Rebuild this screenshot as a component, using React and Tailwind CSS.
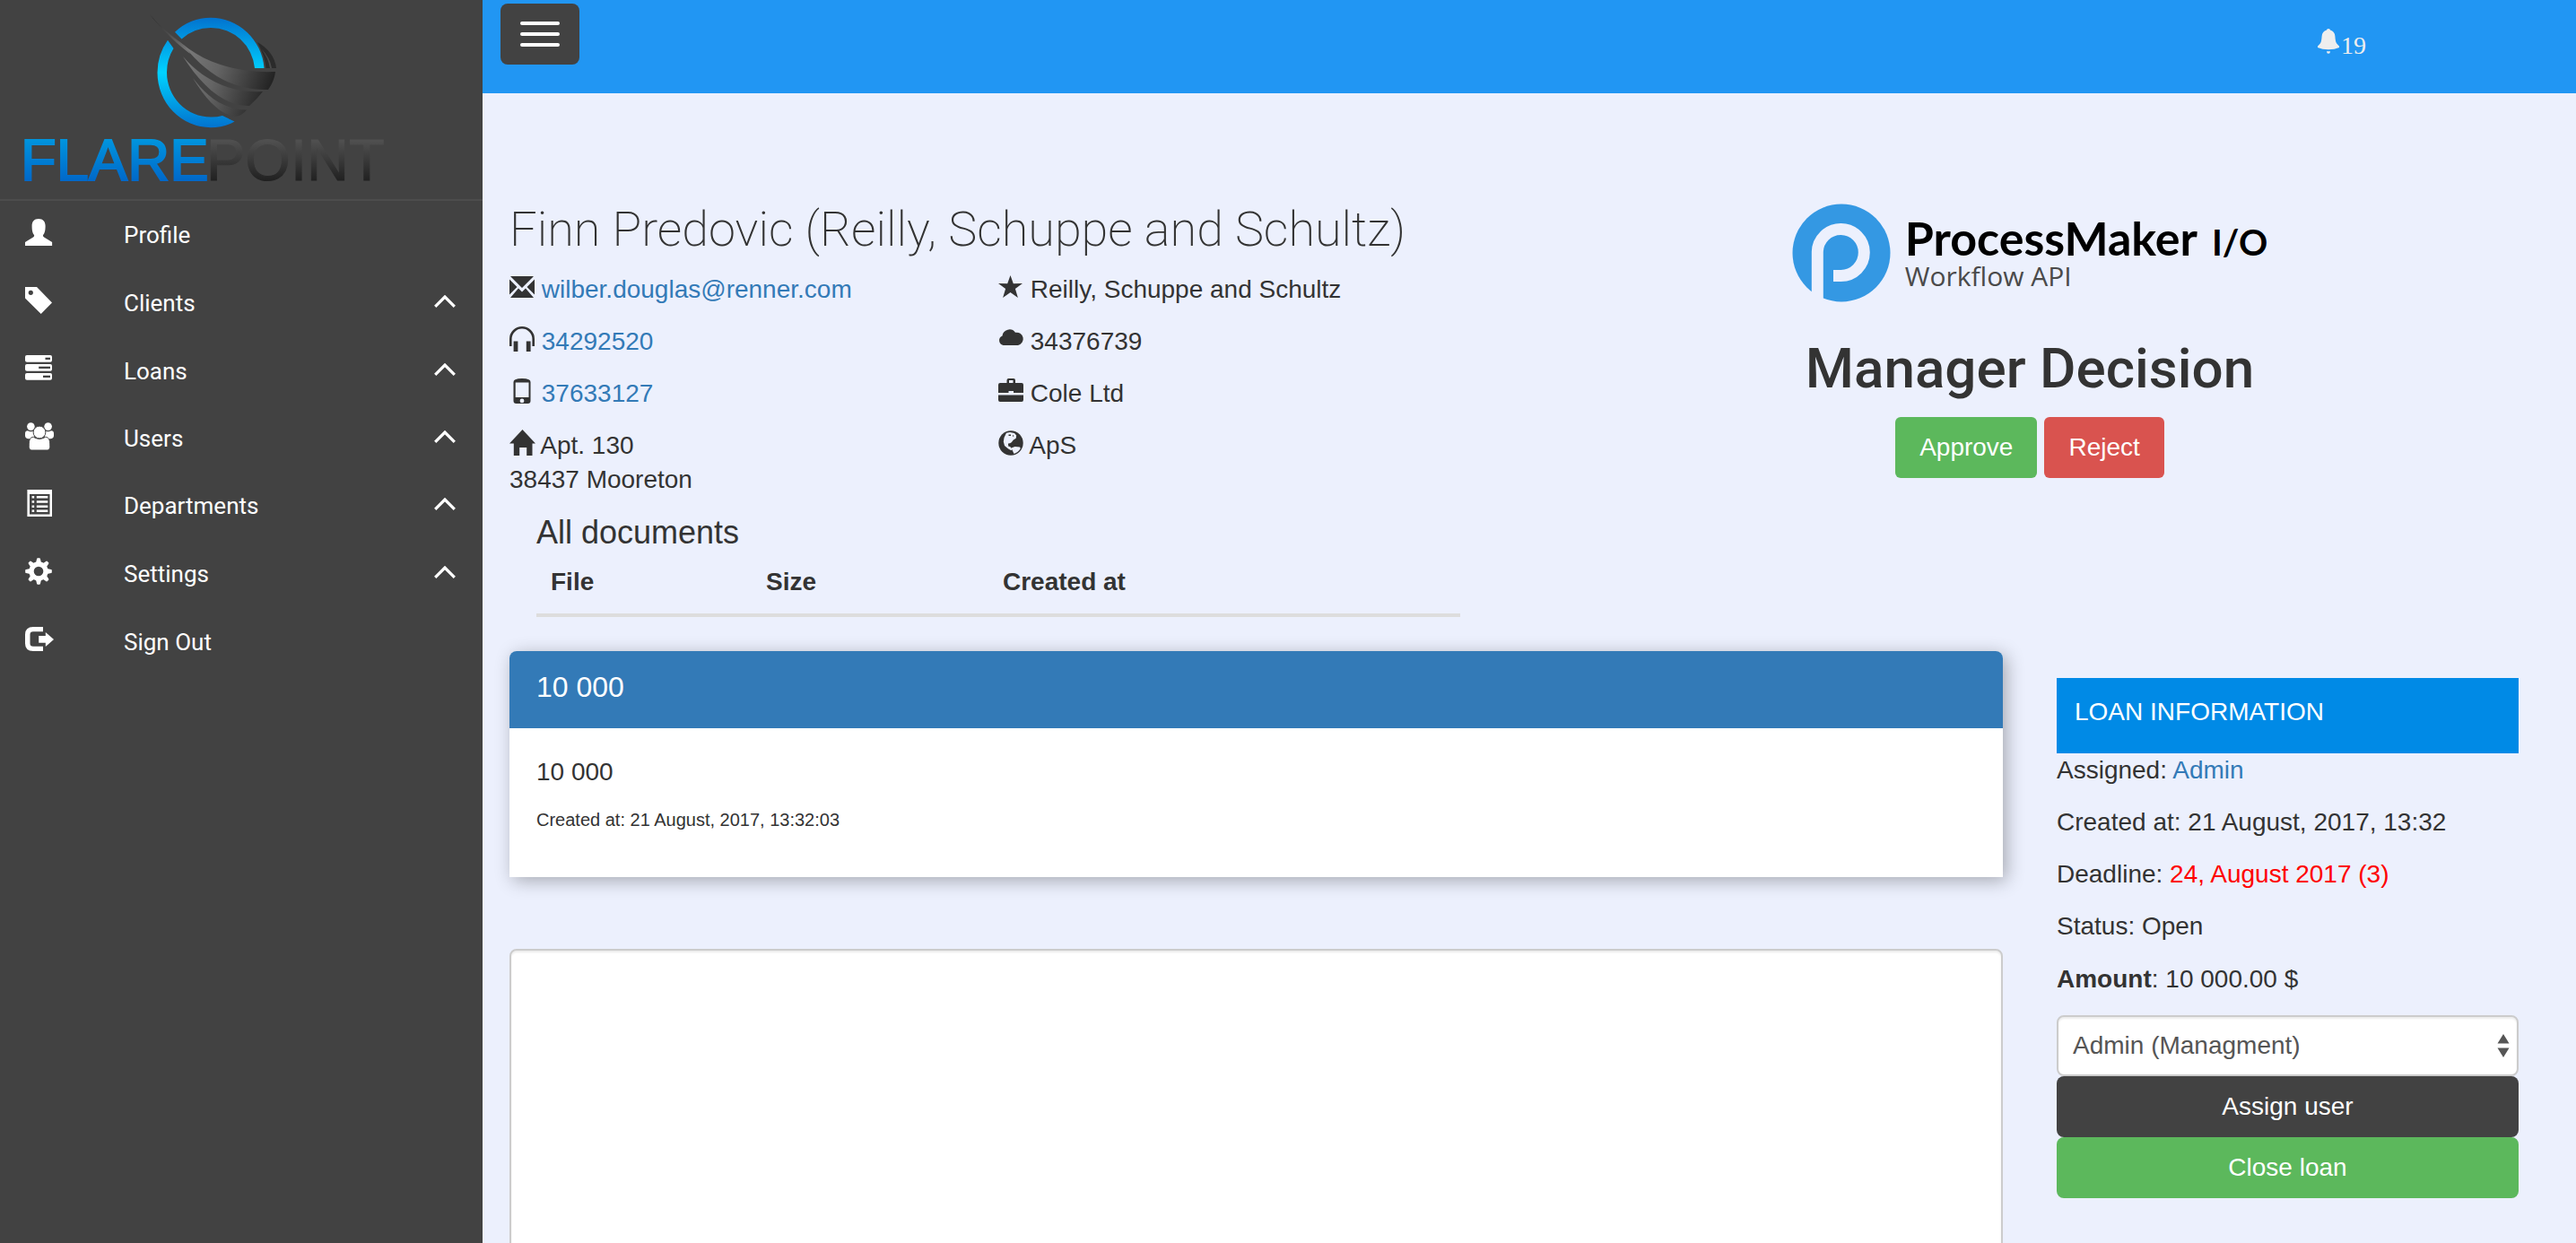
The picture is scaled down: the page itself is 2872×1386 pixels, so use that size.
import React, { useState } from "react";
import clsx from "clsx";

const navIcons = {
  profile: (
    <path d="M0 30v-4l9-5.500q1.500-1 1-2.500C8 16 7.600 12 7.600 8 7.600 3 10 0 15 0s7.600 3 7.600 8c0 4-.500 8-2.500 10q-.500 1.500 1 2.500l9 5.500v4z" />
  ),
  clients: (
    <path
      fillRule="evenodd"
      d="M0 0h13l17 17.500L17.700 30 0 12.400zM6.300 3.700a2.600 2.600 0 1 0 0 5.200 2.600 2.600 0 0 0 0-5.200z"
    />
  ),
  loans: (
    <>
      <rect width="30" height="7.700" rx="2" />
      <rect y="10" width="30" height="7.700" rx="2" />
      <rect y="20" width="30" height="7.700" rx="2" />
      <g fill="#424242">
        <rect x="22.500" y="2.700" width="5.500" height="2.300" />
        <rect x="15.200" y="12.700" width="12.800" height="2.300" />
        <rect x="20" y="22.700" width="8" height="2.300" />
      </g>
    </>
  ),
  users: (
    <>
      <circle cx="6.400" cy="4.600" r="4.300" />
      <circle cx="25.600" cy="4.600" r="4.300" />
      <path d="M0 12.500C0 10 1 9.300 3 9.300c2 1.200 5 1.200 7 0v9H4c-2.500 0-4-1.500-4-3.500zM32 12.500c0-2.500-1-3.200-3-3.200-2 1.200-5 1.200-7 0v9h6c2.500 0 4-1.500 4-3.500z" />
      <g stroke="#424242" strokeWidth="1">
        <path d="M4.200 25c0-5.500 1.500-8.700 5.300-8.700 4 2.700 9 2.700 13 0 3.800 0 5.300 3.200 5.300 8.700v2.500c0 2.200-1.500 3.500-3.500 3.500H7.700c-2 0-3.500-1.300-3.500-3.500z" />
        <circle cx="16" cy="11" r="6.900" />
      </g>
    </>
  ),
  departments: (
    <>
      <path fillRule="evenodd" d="M2.400 0H30v30H2.400zM5 5v22.600h22.500V5z" />
      <path d="M7.600 7h2.600v2.500H7.600zM12.800 7h12.500v2.500H12.800zM7.600 12.300h2.600v2.500H7.600zM12.800 12.300h12.500v2.500H12.800zM7.600 17.400h2.600v2.500H7.600zM12.800 17.400h12.500v2.500H12.800zM7.600 22.500h2.600V25H7.600zM12.800 22.500h12.500V25H12.800z" />
    </>
  ),
  settings: (
    <>
      {[0, 45, 90, 135].map((deg) => (
        <path
          key={deg}
          d="M12.300 4.500l.800-3.500q.200-.800 1-.800h1.800q.800 0 1 .8l.800 3.500v21l-.800 3.500q-.200.800-1 .8h-1.800q-.800 0-1-.8l-.800-3.500z"
          transform={`rotate(${deg} 15 15)`}
        />
      ))}
      <circle cx="15" cy="15" r="10.700" />
      <circle cx="15" cy="15" r="5.300" fill="#424242" />
    </>
  ),
  signout: (
    <>
      <path d="M20 1v5.200H9q-3.500 0-3.500 3.300v10q0 3.300 3.500 3.300h11V28H9q-9 0-9-8.500v-10Q0 1 9 1z" />
      <path d="M15.200 11h7.600V7L32 15l-9.200 8v-4.200h-7.600z" />
    </>
  ),
};

const navItems = [
  { icon: "profile", label: "Profile" },
  { icon: "clients", label: "Clients", sub: true },
  { icon: "loans", label: "Loans", sub: true },
  { icon: "users", label: "Users", sub: true, compact: true },
  { icon: "departments", label: "Departments", sub: true },
  { icon: "settings", label: "Settings", sub: true },
  { icon: "signout", label: "Sign Out" },
];

const infoIcons = {
  mail: (
    <path d="M1 2h26L14 15zM0 5.500L8.500 14 0 22.500zM28 5.500L19.500 14l8.500 8.500zM1 26l9-10.500 4 4 4-4L27 26z" />
  ),
  headphones: (
    <>
      <path d="M1.300 22v-8a12.700 12.700 0 0 1 25.400 0v8" fill="none" stroke="currentColor" strokeWidth="2.600" />
      <path d="M4.600 16.500h4.800V28H4.600zM18.800 16.500h4.800V28h-4.800z" />
    </>
  ),
  phone: (
    <path
      fillRule="evenodd"
      d="M4.500 4q0-2 2-2.800Q9 0 14 0t7.500 1.200q2 .8 2 2.800v21q0 3-3 3h-13q-3 0-3-3zM6.700 4.600v16.400h14.800V4.600zM14 22.500a2.400 2.400 0 1 0 0 4.800 2.400 2.400 0 0 0 0-4.800z"
    />
  ),
  home: <path d="M0 14.500L14.500-1 29 14.500h-3.500V28h-6.300V19h-8v9H4.800V14.500z" />,
  star: <path d="M13.500 1l3.300 9.200 10.200-.1-8.100 6 3 9.900-8.400-5.900L5.100 26l3-9.900-8.100-6 10.200.1z" />,
  cloud: (
    <path d="M5.500 21a5.500 5.500 0 0 1-1-10.500A8 8 0 0 1 19 6.800a7.200 7.200 0 1 1 3 14.200z" />
  ),
  briefcase: (
    <path
      fillRule="evenodd"
      d="M9.500 5V2q0-2 2-2h5.500q2 0 2 2v3H26q2 0 2 2v9H17v-2h-5.500v2H0V7q0-2 2-2zM12 2v3h4.500V2zM0 18.500h28V24q0 2-2 2H2q-2 0-2-2z"
    />
  ),
  globe: (
    <>
      <circle cx="14" cy="14" r="13.700" />
      <path
        fill="#ecf0fd"
        d="M9 2.800l4-.8 5 1 2.200 2.500-.5 3.300-2.800 1.600-2.200 2.800-2.500 1.500-1.500 2.500 2.700 1 2 2.800-1 1.200-3.200-1.700L7 17l-1.200-4.500L6.500 8zM14.500 19.500l4-1.500 5.500.5.800 1.500q-2.500 4.500-7.300 6z"
      />
      <path d="M11.500 4.500h2.500v1.500h-2.500zM16 5l1.500 1-1.500 1zM11 14.500h2v1.500h-2z" />
    </>
  ),
};

function InfoIcon({ name }) {
  return (
    <svg
      className="inline-block size-7 overflow-visible align-[-2px]"
      viewBox="0 0 28 28"
      fill="currentColor"
      aria-hidden="true"
    >
      {infoIcons[name]}
    </svg>
  );
}

function FlarepointLogo() {
  return (
    <svg className="block h-[222px] w-[460px]" viewBox="0 0 460 222" role="img" aria-label="Flarepoint">
      <defs>
        <linearGradient id="ring" gradientUnits="userSpaceOnUse" x1="0" y1="20" x2="0" y2="142">
          <stop offset="0" stopColor="#0273cf" />
          <stop offset=".5" stopColor="#00d2ff" />
          <stop offset="1" stopColor="#0273cf" />
        </linearGradient>
        <linearGradient id="blade" gradientUnits="userSpaceOnUse" x1="205" y1="60" x2="302" y2="95">
          <stop offset="0" stopColor="#7a7a7a" />
          <stop offset=".4" stopColor="#646464" />
          <stop offset="1" stopColor="#232323" />
        </linearGradient>
        <linearGradient id="tip" gradientUnits="userSpaceOnUse" x1="168" y1="16" x2="210" y2="60">
          <stop offset="0" stopColor="#2c2c2c" />
          <stop offset=".5" stopColor="#4e4e4e" />
          <stop offset="1" stopColor="#7a7a7a" />
        </linearGradient>
        <linearGradient id="flare" x1="0" y1="0" x2="0" y2="1">
          <stop offset=".2" stopColor="#0093dd" />
          <stop offset=".85" stopColor="#0066c8" />
        </linearGradient>
        <linearGradient id="point" x1="0" y1="0" x2="0" y2="1">
          <stop offset=".2" stopColor="#505050" />
          <stop offset=".85" stopColor="#1e1e1e" />
        </linearGradient>
      </defs>
      <path
        fill="url(#ring)"
        d="M195 35.700A59.500 61.200 0 0 1 235 19.800 59.500 61.200 0 0 1 294.500 76H284A49 49.800 0 0 0 235 31 49 49.800 0 0 0 202.500 43.400zM187 44.800A59.500 61.200 0 0 0 175.500 81 59.500 61.200 0 0 0 235 142.200Q250 142.200 261.500 135.500L248 129A49 49.800 0 0 1 235 130.500 49 49.800 0 0 1 186 80.700 49 49.800 0 0 1 193.500 54z"
      />
      <path fill="#2b2b2b" d="M287 47Q306 58 308 76H296.500Q295 62 287 47z" />
      <path fill="#4a4a4a" d="M291 54Q301 64 303 76H301Q299 64 291 54z" />
      <path fill="url(#blade)" d="M191 38C215 62 250 82 307 80Q306 90 299 100C262 101 232 85 204 50z" />
      <path fill="url(#tip)" d="M167 16Q180 32 206 51L212 60Q196 48 186 37 174 26 167 16z" />
      <path fill="url(#blade)" d="M204 63C222 84 252 105 293 102Q287 110 278 118C252 119 226 98 204 63z" />
      <path fill="url(#blade)" d="M215 87C228 104 246 122 275 122.500Q270 129 262 130C246 128 230 112 215 87z" />
      <text x="23" y="201" fontSize="65" fontFamily="Liberation Sans, sans-serif" fill="url(#flare)" stroke="url(#flare)" strokeWidth="2">
        FLARE
      </text>
      <text x="230" y="201" fontSize="65" fontFamily="Liberation Sans, sans-serif" fill="url(#point)" stroke="url(#point)">
        POINT
      </text>
    </svg>
  );
}

function Sidebar() {
  return (
    <aside className="w-[538px] shrink-0 bg-[#424242] text-white">
      <a href="#home" className="block border-b-2 border-[#4d4d4d]">
        <FlarepointLogo />
      </a>
      <nav className="flex flex-col font-[Roboto,sans-serif] text-[26px]">
        {navItems.map((item) => (
          <a
            key={item.label}
            href={`#${item.icon}`}
            className={clsx("flex items-center pr-[30px] pl-7", item.compact ? "h-[74px]" : "h-[76px]")}
          >
            <svg
              className="mb-1.5 size-[30px] shrink-0 overflow-visible"
              viewBox="0 0 30 30"
              fill="currentColor"
              aria-hidden="true"
            >
              {navIcons[item.icon]}
            </svg>
            <span className="ml-20 flex-1">{item.label}</span>
            {item.sub && (
              <svg className="mb-1 h-[14px] w-6" viewBox="0 0 24 14" fill="none" stroke="currentColor" strokeWidth="3.200" aria-hidden="true">
                <path d="M1.200 12.800L12 2l10.800 10.800" />
              </svg>
            )}
          </a>
        ))}
      </nav>
    </aside>
  );
}

function TopBar() {
  return (
    <header className="flex h-[104px] items-start justify-between bg-[#2196f3] pt-1 pr-[234px] pl-5">
      <button
        type="button"
        aria-label="Menu"
        className="flex h-[68px] w-[88px] flex-col items-center justify-center gap-2 rounded-lg bg-[#424242]"
      >
        <span className="h-1 w-11 rounded-sm bg-white" />
        <span className="h-1 w-11 rounded-sm bg-white" />
        <span className="h-1 w-11 rounded-sm bg-white" />
      </button>
      <a href="#notifications" className="mt-7 flex text-[#eee]">
        <svg className="size-7" viewBox="0 0 28 28" fill="currentColor" aria-hidden="true">
          <path d="M12 1.500Q12 0 14 0t2 1.500q5 1.300 5.400 7 .3 6.500 2 8.300L26 19.500v1.500q-5 2.200-12 2.200T2 21v-1.500l2.600-2.700q1.700-1.800 2-8.300.4-5.700 5.400-7zM12 25.200h4q0 2.600-2 2.600t-2-2.600z" />
        </svg>
        <span className="font-[Liberation_Serif,serif] text-[28px] leading-[38px]">19</span>
      </a>
    </header>
  );
}

function ClientInfo() {
  return (
    <section className="w-1/2 px-[30px]">
      <h1 className="mb-3 font-[Roboto,sans-serif] text-[54px] leading-[72px] font-extralight">
        Finn Predovic (Reilly, Schuppe and Schultz)
      </h1>
      <div className="grid grid-cols-2">
        <div className="flex flex-col gap-5">
          <p>
            <InfoIcon name="mail" />{" "}
            <a href="mailto:wilber.douglas@renner.com" className="text-[#337ab7]">wilber.douglas@renner.com</a>
          </p>
          <p>
            <InfoIcon name="headphones" /> <a href="tel:34292520" className="text-[#337ab7]">34292520</a>
          </p>
          <p>
            <InfoIcon name="phone" /> <a href="tel:37633127" className="text-[#337ab7]">37633127</a>
          </p>
          <p>
            <InfoIcon name="home" /> Apt. 130
            <br />
            38437 Mooreton
          </p>
        </div>
        <div className="flex flex-col gap-5">
          <p><InfoIcon name="star" /> Reilly, Schuppe and Schultz</p>
          <p><InfoIcon name="cloud" /> 34376739</p>
          <p><InfoIcon name="briefcase" /> Cole Ltd</p>
          <p><InfoIcon name="globe" /> ApS</p>
        </div>
      </div>

      <div className="mt-5 px-[30px]">
        <h3 className="text-4xl leading-10">All documents</h3>
        <table className="w-full text-left">
          <thead>
            <tr className="border-b-4 border-[#ddd]">
              <th className="w-60 p-4">File</th>
              <th className="w-[264px] p-4">Size</th>
              <th className="p-4">Created at</th>
            </tr>
          </thead>
        </table>
      </div>
    </section>
  );
}

function Decision() {
  return (
    <section className="flex w-1/2 flex-col items-center px-[30px] pt-[7px]">
      <div className="flex gap-4">
        <svg className="size-[110px]" viewBox="0 0 110 110" aria-hidden="true">
          <circle cx="55" cy="55" r="54.500" fill="#3498e3" />
          <path
            d="M46 80.500H54.500A26 26 0 1 0 28.300 54V112"
            fill="none"
            stroke="#ecf0fd"
            strokeWidth="13"
          />
        </svg>
        <div className="pt-3">
          <div className="flex items-baseline gap-4 font-[Lato,sans-serif] text-[52px] leading-[52px] font-bold text-black">
            ProcessMaker <span className="text-[40px]">I/O</span>
          </div>
          <div className="font-[Open_Sans,sans-serif] text-[30px] leading-6 text-[#4a4a4a]">
            Workflow API
          </div>
        </div>
      </div>
      <h2 className="mt-10 font-[Roboto,sans-serif] text-[62px] leading-[68px] font-medium">Manager Decision</h2>
      <div className="mt-5 flex gap-2 text-white">
        <button type="button" className="h-[68px] rounded-md bg-[#5cb85c] px-[27px]">Approve</button>
        <button type="button" className="h-[68px] rounded-md bg-[#d9534f] px-[27px]">Reject</button>
      </div>
    </section>
  );
}

function LoanPanel({ assignee, setAssignee }) {
  return (
    <aside className="w-1/4 px-[30px] pt-[30px]">
      <h4 className="h-[84px] bg-[#008ae6] px-5 pt-[19px] text-white">LOAN INFORMATION</h4>
      <div className="flex flex-col gap-5">
        <p>Assigned: <a href="#admin" className="text-[#337ab7]">Admin</a></p>
        <p>Created at: 21 August, 2017, 13:32</p>
        <p>Deadline: <span className="text-[#ff0000]">24, August 2017 (3)</span></p>
        <p>Status: Open</p>
        <p className="leading-10"><b>Amount</b>: 10 000.00 $</p>
      </div>
      <div className="relative mt-5">
        <select
          aria-label="Assignee"
          value={assignee}
          onChange={(e) => setAssignee(e.target.value)}
          className="block h-[68px] w-full appearance-none rounded-lg border-2 border-[#ccc] bg-white px-4 text-[#555] shadow-[inset_0_2px_2px_rgba(0,0,0,0.075)]"
        >
          <option value="admin">Admin (Managment)</option>
        </select>
        <svg className="pointer-events-none absolute top-[21px] right-2.5 h-[26px] w-[14px]" viewBox="0 0 14 26" fill="#555" aria-hidden="true">
          <path d="M7 0l6.500 10.500H.500zM7 26L.500 15.500h13z" />
        </svg>
      </div>
      <button type="button" className="block h-[68px] w-full rounded-lg bg-[#424242] text-white">Assign user</button>
      <button type="button" className="block h-[68px] w-full rounded-lg bg-[#5cb85c] text-white">Close loan</button>
    </aside>
  );
}

export default function App() {
  const [assignee, setAssignee] = useState("admin");
  const [comment, setComment] = useState("");

  return (
    <div className="flex h-screen overflow-hidden bg-[#ecf0fd] font-[Liberation_Sans,Arial,sans-serif] text-[28px] leading-[38px] text-[#333]">
      <Sidebar />
      <div className="min-w-0 flex-1">
        <TopBar />
        <main className="pt-[116px] pr-[34px]">
          <div className="flex">
            <ClientInfo />
            <Decision />
          </div>

          <div className="mt-[38px] flex">
            <div className="w-3/4 px-[30px]">
              <article className="rounded-t-lg bg-white shadow-[4px_4px_20px_rgba(0,0,0,0.3)]">
                <h3 className="rounded-t-lg bg-[#337ab7] px-[30px] pt-5 pb-[26px] text-[32px] leading-10 text-white">
                  10 000
                </h3>
                <div className="px-[30px] pt-[30px] pb-[50px]">
                  <p>10 000</p>
                  <p className="mt-5 text-[20px] leading-7">Created at: 21 August, 2017, 13:32:03</p>
                </div>
              </article>
              <textarea
                aria-label="Comment"
                value={comment}
                onChange={(e) => setComment(e.target.value)}
                className="mt-20 block h-[400px] w-full resize-none rounded-lg border-2 border-[#ccc] bg-white p-4 shadow-[inset_0_2px_2px_rgba(0,0,0,0.075)]"
              />
            </div>
            <LoanPanel assignee={assignee} setAssignee={setAssignee} />
          </div>
        </main>
      </div>
    </div>
  );
}
